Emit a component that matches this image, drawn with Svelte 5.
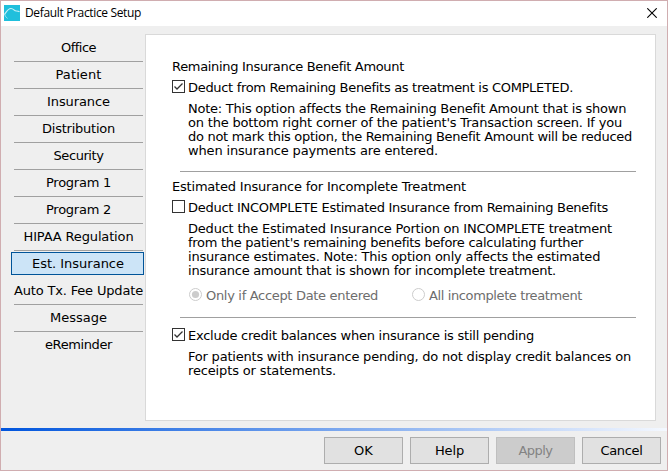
<script>
    let pages = [
        { name: "Office", width: 35 },
        { name: "Patient", width: 46 },
        { name: "Insurance", width: 63 },
        { name: "Distribution", width: 73 },
        { name: "Security", width: 50 },
        { name: "Program 1", width: 65 },
        { name: "Program 2", width: 65 },
        { name: "HIPAA Regulation", width: 110 },
        { name: "Est. Insurance", width: 92 },
        { name: "Auto Tx. Fee Update", width: 129 },
        { name: "Message", width: 57 },
        { name: "eReminder", width: 67 },
    ];

    let benefitNote = [
        { text: "Note: This option affects the Remaining Benefit Amount that is shown", width: 438 },
        { text: "on the bottom right corner of the patient's Transaction screen. If you", width: 434 },
        { text: "do not mark this option, the Remaining Benefit Amount will be reduced", width: 444 },
        { text: "when insurance payments are entered.", width: 250 },
    ];

    let estimateNote = [
        { text: "Deduct the Estimated Insurance Portion on INCOMPLETE treatment", width: 424 },
        { text: "from the patient's remaining benefits before calculating further", width: 395 },
        { text: "insurance estimates. Note: This option only affects the estimated", width: 412 },
        { text: "insurance amount that is shown for incomplete treatment.", width: 368 },
    ];

    let creditNote = [
        { text: "For patients with insurance pending, do not display credit balances on", width: 443 },
        { text: "receipts or statements.", width: 148 },
    ];

    let buttons = [
        { label: "OK", width: 19 },
        { label: "Help", width: 29 },
        { label: "Apply", width: 34, disabled: true },
        { label: "Cancel", width: 42 },
    ];

    let selected = "Est. Insurance";
    let deductCompleted = true;
    let deductIncomplete = false;
    let excludeCredit = true;
    let scope = "accepted";

    // spread the letters so that the text takes the given width
    function fit(node, width) {
        const natural = node.getBoundingClientRect().width;
        const spacing = (width - natural) / node.textContent.length;
        node.style.letterSpacing = spacing + "px";
    }
</script>

{#snippet checkbox(checked)}
    <svg class="box" viewBox="0 0 13 13">
        <rect x="0.5" y="0.5" width="12" height="12" fill="#fff" stroke="#333" />
        {#if checked}
            <path d="M2.5 6.5 L5 9 L10.5 3.5" fill="none" stroke="#333" stroke-width="1.3" />
        {/if}
    </svg>
{/snippet}

{#snippet radio(checked)}
    <svg class="box" viewBox="0 0 13 13">
        <circle cx="6.5" cy="6.5" r="6" fill="#fff" stroke="#ccc" />
        {#if checked}
            <circle cx="6.5" cy="6.5" r="3.6" fill="#ccc" />
        {/if}
    </svg>
{/snippet}

{#snippet note(lines)}
    <div class="note">
        {#each lines as line}
            <div><span use:fit={line.width}>{line.text}</span></div>
        {/each}
    </div>
{/snippet}

<div class="window">
    <header>
        <svg class="logo" viewBox="0 0 16 16">
            <rect width="16" height="16" fill="#20bfdc" />
            <path d="M0.5 9.5 C2 7.5 3.8 3.5 7 3.5 C9.8 3.5 10 6 12.3 6 C13.6 6 14.4 6 15.5 6.8" fill="none" stroke="#c9f1f7" stroke-width="1.2" />
            <path d="M0.5 8.8 C1 11 2 12.3 3.5 13.3" fill="none" stroke="#a5e6f1" stroke-width="1" />
        </svg>
        <span class="title"><span use:fit={116}>Default Practice Setup</span></span>
        <svg class="close" viewBox="0 0 10 10">
            <path d="M0.3 0.3 L9.7 9.7 M9.7 0.3 L0.3 9.7" stroke="#000" stroke-width="1.1" />
        </svg>
    </header>

    <main>
        <nav>
            {#each pages as page}
                <button class="page" class:selected={page.name === selected} on:click={() => (selected = page.name)}>
                    <span use:fit={page.width}>{page.name}</span>
                </button>
            {/each}
        </nav>

        <section>
            <div class="heading"><span use:fit={232}>Remaining Insurance Benefit Amount</span></div>
            <div class="option">
                {@render checkbox(deductCompleted)}
                <span use:fit={385}>Deduct from Remaining Benefits as treatment is COMPLETED.</span>
            </div>
            {@render note(benefitNote)}
            <div class="rule"></div>

            <div class="heading second"><span use:fit={294}>Estimated Insurance for Incomplete Treatment</span></div>
            <div class="option">
                {@render checkbox(deductIncomplete)}
                <span use:fit={420}>Deduct INCOMPLETE Estimated Insurance from Remaining Benefits</span>
            </div>
            {@render note(estimateNote)}
            <div class="radios">
                <div class="choice first">
                    {@render radio(scope === "accepted")}
                    <span use:fit={172}>Only if Accept Date entered</span>
                </div>
                <div class="choice">
                    {@render radio(scope === "all")}
                    <span use:fit={153}>All incomplete treatment</span>
                </div>
            </div>
            <div class="rule lower"></div>

            <div class="option last">
                {@render checkbox(excludeCredit)}
                <span use:fit={346}>Exclude credit balances when insurance is still pending</span>
            </div>
            {@render note(creditNote)}
        </section>
    </main>

    <div class="stripe"></div>

    <footer>
        {#each buttons as button}
            <button class="action" disabled={button.disabled}><span use:fit={button.width}>{button.label}</span></button>
        {/each}
    </footer>
</div>

<style>
    :global(body) {
        margin: 0;
        overflow: hidden;
    }

    .window {
        display: flex;
        flex-direction: column;
        box-sizing: border-box;
        width: 668px;
        height: 471px;
        border: 1px solid #d0adb0;
        background: #efefef;
        color: #000;
        font: 13px/14px "DejaVu Sans", Verdana, sans-serif;
        white-space: nowrap;
    }

    header {
        display: flex;
        align-items: flex-start;
        box-sizing: border-box;
        height: 25px;
        padding: 4px 10px 0 3px;
        background: #fff;
    }

    .logo {
        width: 16px;
        height: 16px;
    }

    .title {
        flex: 1;
        margin-left: 5px;
        font: 12px/16px "Open Sans", "Segoe UI", sans-serif;
    }

    .close {
        width: 10px;
        height: 10px;
        margin-top: 3px;
    }

    main {
        display: flex;
        height: 387px;
        margin-top: 8px;
    }

    nav {
        box-sizing: border-box;
        width: 144px;
        padding: 1px 0 0 10px;
    }

    button {
        display: flex;
        align-items: center;
        justify-content: center;
        padding: 0;
        font: inherit;
        color: inherit;
    }

    .page {
        width: 129px;
        height: 27px;
        margin-left: 3px;
        padding-bottom: 1px;
        border: 0;
        border-bottom: 1px solid #a0a0a0;
        background: none;
    }

    .page:last-child {
        border-bottom-color: transparent;
    }

    .page.selected {
        width: 133px;
        height: 23px;
        margin: 1px 0 3px 0;
        padding: 0 0 0 1px;
        border: 1px solid #005499;
        background: #cce4f7;
    }

    section {
        box-sizing: border-box;
        width: 511px;
        height: 387px;
        padding: 25px 0 0 26px;
        border: 1px solid #d9d9d9;
        background: #fff;
    }

    .heading {
        height: 14px;
    }

    .heading.second {
        margin-top: 8px;
    }

    .option,
    .radios,
    .choice {
        display: flex;
        align-items: center;
        height: 15px;
    }

    .option {
        gap: 3px;
        margin-top: 5px;
    }

    .option.last {
        margin-top: 9px;
    }

    .option span,
    .choice span {
        padding-top: 3px;
    }

    .box {
        flex: none;
        width: 13px;
        height: 13px;
    }

    .note {
        margin: 8px 0 0 16px;
    }

    .rule {
        width: 456px;
        height: 1px;
        margin: 13px 0 0 8px;
        background: #a0a0a0;
    }

    .rule.lower {
        margin-top: 15px;
    }

    .radios {
        margin: 9px 0 0 17px;
        color: #6d6d6d;
    }

    .choice {
        gap: 4px;
    }

    .choice.first {
        width: 223px;
    }

    .stripe {
        height: 3px;
        margin-top: 7px;
        background: linear-gradient(to right, #0055dd, #f4f8ff);
    }

    footer {
        display: flex;
        justify-content: flex-end;
        gap: 7px;
        padding: 6px 6px 0 0;
    }

    .action {
        box-sizing: border-box;
        width: 79px;
        height: 27px;
        border: 1px solid #adadad;
        background: #e1e1e1;
    }

    .action:disabled {
        border-color: #bfbfbf;
        background: #ccc;
        color: #838383;
    }
</style>
